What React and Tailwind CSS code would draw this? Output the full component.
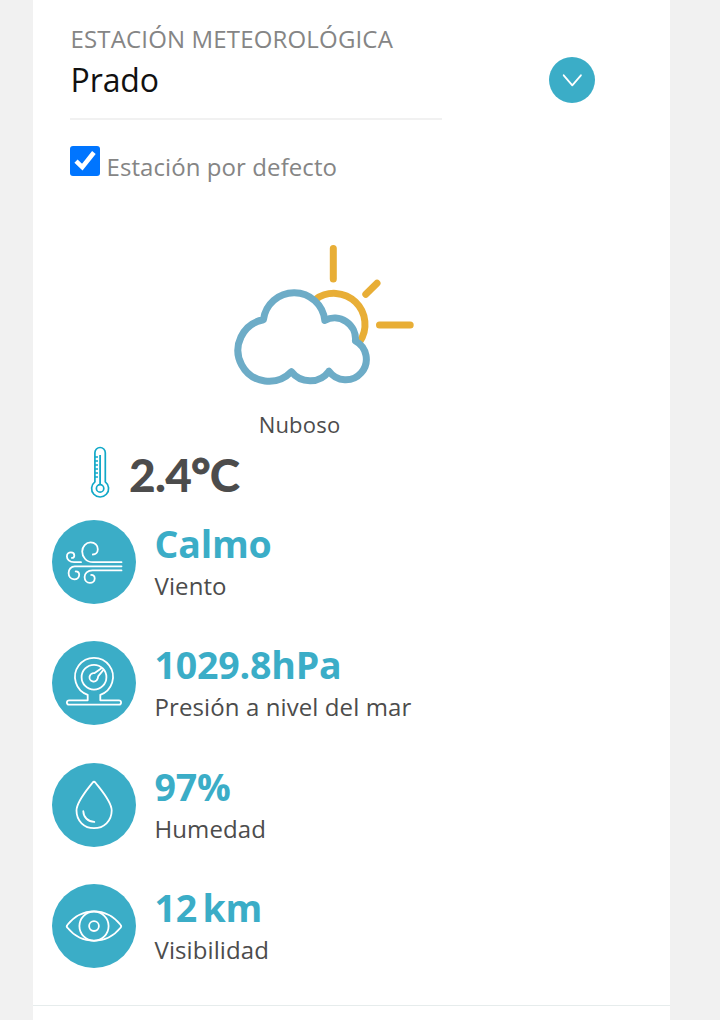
import { useState } from "react";

function CloudSunIcon() {
  return (
    <svg
      viewBox="230 240 190 150"
      className="w-[190px] h-[150px]"
      fill="none"
      strokeWidth="7"
      strokeLinecap="round"
      strokeLinejoin="round"
    >
      <g stroke="#e8ae36">
        <path d="M333.3 248.5V279M365.8 294.2L377 283.3M379.5 325H410.2" />
        <path d="M315.5 299.5A31 31 0 0 1 359.5 342" strokeLinecap="butt" />
      </g>
      <path
        stroke="#6dacc7"
        d="M263.4 319.8A30.9 30.9 0 0 1 324.8 320.4A21 21 0 0 1 355.4 341A20.6 20.6 0 1 1 329 371.2A23.5 23.5 0 0 1 291.4 371.7A31 31 0 1 1 263.4 319.8Z"
      />
    </svg>
  );
}

function ThermometerIcon() {
  return (
    <svg viewBox="0 0 20 52" className="w-5 h-[52px]" fill="none" stroke="#12a9c8" strokeWidth="1.7">
      <path d="M4.9 35.8V6.7a5.2 5.2 0 0 1 10.4 0V35.8a8.5 8.5 0 1 1-10.4 0Z" />
      <circle cx="10.1" cy="42.4" r="3.7" />
      <path d="M10.1 9v29.5" strokeWidth="1.8" />
      <path d="M5 11h3M5 15h3M5 19h3M5 23h3M5 27h3M5 31h3" strokeWidth="1.5" />
    </svg>
  );
}

function WindIcon() {
  return (
    <>
      <path d="M69.5 42.2H41C34 42.2 30.2 36.5 30.2 31.5C30.2 26.5 34 22.4 38.6 22.4C43 22.4 45.8 25.6 45.8 29.2C45.8 32.4 43.6 34.5 40.8 34.5" />
      <path d="M29 42.2H22C17.5 42.2 14.9 39.2 14.9 36.4C14.9 34 16.7 32.3 18.9 32.3C21 32.3 22.3 33.7 22.3 35.4C22.3 36.8 21.3 37.9 19.9 37.9" />
      <path d="M69.5 46.3H22.8C19 46.3 16.6 49.6 16.6 53C16.6 56.6 19 59.3 22.2 59.3C25.2 59.3 27.2 57.3 27.2 54.8C27.2 52.7 25.6 51.4 23.7 51.4" />
      <path d="M69.5 50.4H40.5C35.5 50.4 32.6 53.6 32.6 57C32.6 60.5 34.8 62.9 37.9 62.9C40.8 62.9 42.7 60.8 42.7 58.5C42.7 56.4 41.3 54.9 39.2 54.9" />
    </>
  );
}

function PressureIcon() {
  return (
    <>
      <path d="M35.7 59.3V53.8A19 19 0 1 1 48.3 53.8V59.3H66.9a2.2 2.2 0 0 1 0 4.4H17.1a2.2 2.2 0 0 1 0-4.4Z" />
      <circle cx="42" cy="36.2" r="12.4" />
      <path d="M49.5 27.3L42.3 32.2A4.2 4.2 0 1 0 45.7 37.6Q45.9 35.8 46.5 34.8L51.2 29.2" />
    </>
  );
}

function DropIcon() {
  return (
    <>
      <path d="M40.5 19.7Q42 17.8 43.5 19.7C48.5 26.3 59.7 38.5 59.7 47.5C59.7 58 51.8 65.2 42 65.2S24.5 58 24.5 47.5C24.5 38.5 35.5 26.3 40.5 19.7Z" />
      <path d="M31.3 48.2C31.5 54.3 36 58.7 42.3 58.9" />
    </>
  );
}

function EyeIcon() {
  return (
    <>
      <path d="M15.5 40.8C22 32.8 31 27.4 42 27.4S62 32.8 68.5 40.8Q70 42.3 68.5 43.8C62 51.8 53 56.8 42 56.8S22 51.8 15.5 43.8Q14 42.3 15.5 40.8Z" />
      <circle cx="42" cy="42.1" r="14.6" />
      <circle cx="42" cy="42.1" r="4.9" />
    </>
  );
}

const readings = [
  { value: "Calmo", label: "Viento", Icon: WindIcon },
  { value: "1029.8hPa", label: "Presión a nivel del mar", Icon: PressureIcon },
  { value: "97%", label: "Humedad", Icon: DropIcon },
  { value: "12 km", label: "Visibilidad", Icon: EyeIcon },
];

function Reading({ value, label, Icon }) {
  return (
    <li className="flex h-[84px] gap-[18.5px]">
      <svg
        viewBox="0 0 84 84"
        className="w-[84px] h-[84px] shrink-0 rounded-full bg-[#3badc7]"
        fill="none"
        stroke="#ffffff"
        strokeWidth="1.8"
        strokeLinecap="round"
        strokeLinejoin="round"
      >
        <Icon />
      </svg>
      <div>
        <p className="text-[37.5px] leading-[47px] h-[50px] font-bold text-[#3badc7] tracking-[-0.2px] [word-spacing:-4px]">{value}</p>
        <p className="text-[24px] leading-8 text-[#4c4c4c] tracking-[0.1px]">{label}</p>
      </div>
    </li>
  );
}

function App() {
  const [isDefault, setIsDefault] = useState(true);

  return (
    <div className="h-[1020px] overflow-hidden bg-[#f1f1f1] pl-[32.5px] font-['Open_Sans',sans-serif]">
      <main className="w-[637.5px] h-full bg-white">
        <div className="h-[1006px] border-b border-[#e6ecec]">
          {/* Station selector */}
          <header className="flex justify-between pl-[37.5px] pr-[75px]">
            <div className="w-[372px] h-[120px] pt-[23px] border-b-2 border-[#f1f1f1]">
              <h2 className="pl-[0.5px] text-[24px] leading-8 text-[#858585] whitespace-nowrap tracking-[0.16px]">ESTACIÓN METEOROLÓGICA</h2>
              <p className="pl-[0.5px] text-[32px] leading-[50px] text-[#111111] tracking-[-0.1px]">Prado</p>
            </div>
            <button className="mt-[57px] w-[46px] h-[46px] rounded-full bg-[#3badc7] cursor-pointer" aria-label="Station">
              <svg viewBox="0 0 46 46" fill="none" stroke="#ffffff" strokeWidth="1.8" strokeLinecap="round" strokeLinejoin="round">
                <path d="M14.7 18.3L23.3 28.3L31.9 18.3" />
              </svg>
            </button>
          </header>

          <label className="flex h-[60px] pl-[37.5px] pt-[26px] gap-[6.5px] cursor-pointer">
            <input
              type="checkbox"
              className="sr-only"
              checked={isDefault}
              onChange={(e) => setIsDefault(e.target.checked)}
            />
            <svg viewBox="0 0 30 30" className="w-[30px] h-[30px] shrink-0 rounded-[3px] bg-[#0075ff]">
              {isDefault && <path d="M6 15.2L12.3 21.2L23.9 6.5" fill="none" stroke="#ffffff" strokeWidth="4.6" />}
            </svg>
            <span className="mt-[5px] text-[24px] leading-8 text-[#858585] tracking-[0.08px]">Estación por defecto</span>
          </label>

          {/* Current conditions */}
          <section className="h-[266px] pt-[60px]">
            <div className="pl-[197.5px]">
              <CloudSunIcon />
            </div>
            <p className="mt-[19px] w-[534px] text-center text-[22px] leading-[30px] text-[#4c4c4c] tracking-[0.2px]">Nuboso</p>
          </section>

          <div className="flex h-[73.5px] pl-[57.5px] gap-[19px]">
            <ThermometerIcon />
            <p className="font-['Lato',sans-serif] text-[46px] leading-[57px] font-black text-[#4c4c4c] tracking-[-0.7px]">
              2.4<span className="[-webkit-text-stroke:1px_#4c4c4c]">°</span>C
            </p>
          </div>

          <ul className="flex flex-col gap-[37.5px] pl-[19.5px]">
            {readings.map((reading) => (
              <Reading key={reading.label} {...reading} />
            ))}
          </ul>
        </div>
      </main>
    </div>
  );
}

export default App;
